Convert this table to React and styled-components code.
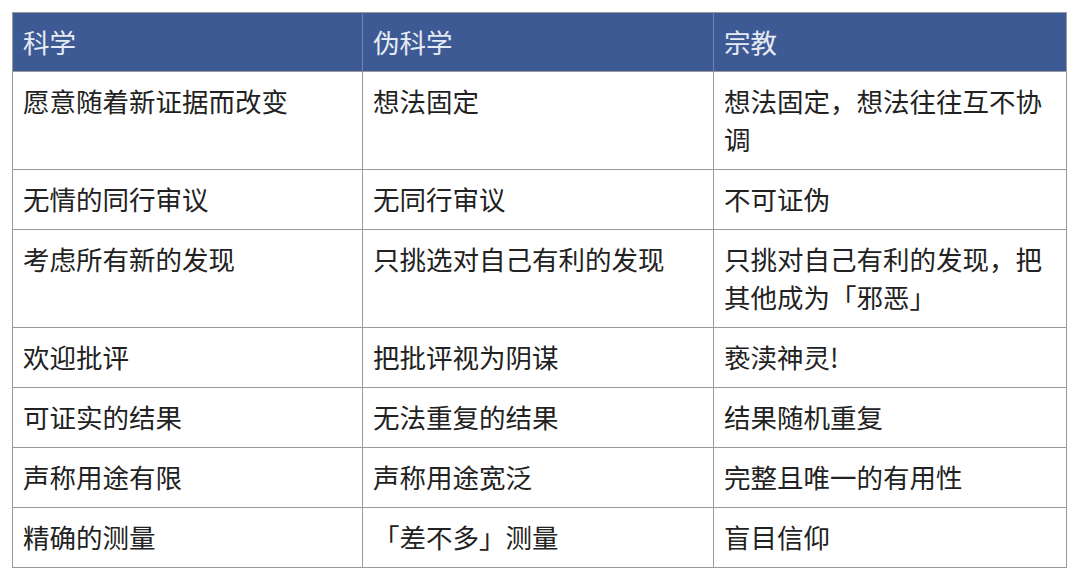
import React from "react";
import styled, { createGlobalStyle } from "styled-components";

const Global = createGlobalStyle`
  html, body { margin: 0; padding: 0; background: #ffffff; }
  body { font-family: "Noto Sans CJK SC", "Noto Sans", sans-serif; }
`;

const Page = styled.div`
  padding: 12px 14px 12px 12px;
`;

const Table = styled.table`
  width: 1054px;
  border-collapse: collapse;
  table-layout: fixed;
  border: 1px solid #9a9a9a;
`;

const Col = styled.col`
  width: ${(p) => p.$w}px;
`;

const HeadCell = styled.th`
  background: #3d5a95;
  color: #e6ebf3;
  font-weight: 400;
  font-size: 26.5px;
  line-height: 38px;
  text-align: left;
  padding: 10px 10px 10px;
  border-left: 1px solid #6f84b0;
  &:first-child { border-left: none; }
`;

const Row = styled.tr`
  border-top: 1px solid #9a9a9a;
`;

const Cell = styled.td`
  color: #222222;
  font-size: 26.5px;
  line-height: 38px;
  vertical-align: top;
  padding: 10px 10px 11px;
  border-left: 1px solid #9a9a9a;
  word-break: break-all;
`;

const widths = [350, 351, 353];
const headers = ["科学", "伪科学", "宗教"];
const rows = [
  ["愿意随着新证据而改变", "想法固定", "想法固定，想法往往互不协调"],
  ["无情的同行审议", "无同行审议", "不可证伪"],
  ["考虑所有新的发现", "只挑选对自己有利的发现", "只挑对自己有利的发现，把其他成为「邪恶」"],
  ["欢迎批评", "把批评视为阴谋", "亵渎神灵!"],
  ["可证实的结果", "无法重复的结果", "结果随机重复"],
  ["声称用途有限", "声称用途宽泛", "完整且唯一的有用性"],
  ["精确的测量", "「差不多」测量", "盲目信仰"],
];

export default function App() {
  return (
    <Page>
      <Global />
      <Table>
        <colgroup>
          {widths.map((w, i) => (
            <Col key={i} $w={w} />
          ))}
        </colgroup>
        <thead>
          <tr>
            {headers.map((h) => (
              <HeadCell key={h}>{h}</HeadCell>
            ))}
          </tr>
        </thead>
        <tbody>
          {rows.map((r, i) => (
            <Row key={i}>
              {r.map((c, j) => (
                <Cell key={j}>{c}</Cell>
              ))}
            </Row>
          ))}
        </tbody>
      </Table>
    </Page>
  );
}
